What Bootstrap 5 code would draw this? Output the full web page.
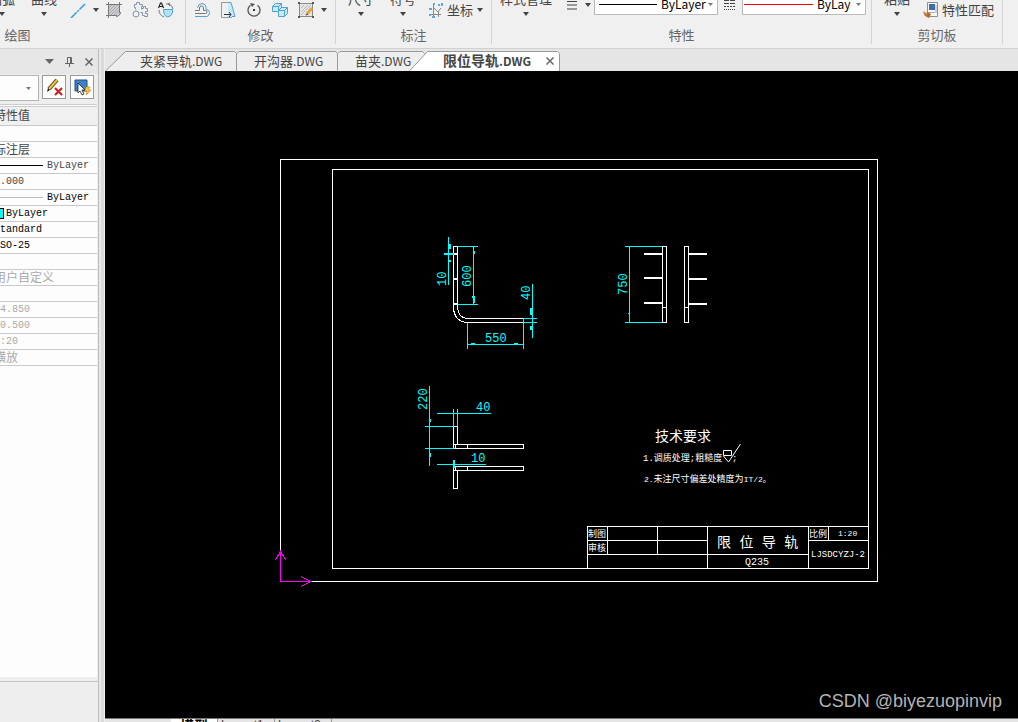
<!DOCTYPE html>
<html lang="zh-CN">
<head>
<meta charset="utf-8">
<meta name="viewport" content="width=device-width, initial-scale=1">
<title>限位导轨.DWG</title>
<link href="https://cdn.jsdelivr.net/npm/bootstrap@5.3.0/dist/css/bootstrap.min.css" rel="stylesheet">
<style>
  body { font-family: "Noto Sans CJK SC", sans-serif; font-size: 13px; line-height: 16px; color: #444; background: #e5e5e5; }
  button, select { font: inherit; color: inherit; }
  button { background: none; border: 0; padding: 0; }
  svg { display: block; flex: none; }

  /* ribbon */
  .ribbon { height: 49px; background: #f0f0f0; border-bottom: 1px solid #d2d2d2; padding-bottom: 4px; }
  .rgroup { height: 62px; border-right: 1px solid #d4d4d4; flex: none; }
  .rgroup-draw { width: 336px; margin-left: -150px; }
  .rgroup-edit { width: 150px; }
  .rgroup-dim { width: 156px; }
  .rgroup-prop { width: 380px; }
  .rgroup-clip { width: 131px; }
  .tools { height: 36px; gap: 10px; padding-right: 8px; }
  .tools-draw { padding-right: 11px; }
  .tools-wide { gap: 6px; padding-right: 5px; }
  .rlabel { height: 26px; line-height: 34px; color: #666; text-align: center; }
  .big { min-width: 32px; height: 27px; display: flex; flex-direction: column; align-items: center; justify-content: space-between; padding-bottom: 2px; white-space: nowrap; }
  .split { display: flex; align-items: center; gap: 7px; }
  .split:not(:last-child) { margin-right: -3px; }
  .labelled { display: flex; align-items: center; gap: 4px; white-space: nowrap; }
  .caret { width: 6px; height: 4px; background: #444; clip-path: polygon(0 0, 100% 0, 50% 100%); flex: none; }
  .combo { width: 124px; height: 22px; background: #fff; border: 1px solid #bbb; margin-bottom: 3px; padding-left: 4px; }
  .combo select { appearance: none; border: 0; padding: 0; width: 56px; color: #000; font-size: 12px; line-height: 20px; flex: none;
    background: url("data:image/svg+xml,%3Csvg xmlns='http://www.w3.org/2000/svg' viewBox='0 0 5 3'%3E%3Cpath d='M0 0h5L2.500 3z' fill='%23777'/%3E%3C/svg%3E") no-repeat right 4px center / 5px 3px; }
  .combo-tight { padding-left: 1px; }
  .combo-tight select { width: 48px; padding-right: 14px; }
  .rule { height: 1px; background: #000; flex: 1; }
  .rule-red { background: #f00; }
  .raised { margin-bottom: 7px; }

  /* property palette */
  .palette { width: 99px; background: #eee; border-right: 1px solid #bdbdbd; overflow: hidden; }
  .splitter { width: 6px; background: #dadada; border-left: 2px solid #e8e8e8; border-right: 1px solid #efefef; }
  .pal-head { height: 25px; background: #e6e6e6; gap: 11px; padding-right: 5px; }
  .pal-tools { height: 30px; padding-top: 1px; gap: 3px; padding-right: 4px; }
  .pal-tools .picker { appearance: none; height: 26px; flex: 1; min-width: 0; border: 1px solid #b5b5b5; border-left: 0; border-radius: 0;
    background: #fdfdfd url("data:image/svg+xml,%3Csvg xmlns='http://www.w3.org/2000/svg' viewBox='0 0 5 3'%3E%3Cpath d='M0 0h5L2.500 3z' fill='%23777'/%3E%3C/svg%3E") no-repeat right 7px center / 5px 3px; }
  .pal-btn { width: 24px; height: 24px; background: #fdfdfd; border: 1px solid #999; display: flex; align-items: center; justify-content: center; }
  .pal-btn + .pal-btn { margin-left: 1px; }
  .pal-body { background: #fdfdfd; border-top: 1px solid #ccc; padding-top: 1px; margin-right: 1px; }
  .props { width: 100%; border-collapse: collapse; font-family: "Liberation Mono", "Noto Sans CJK SC", monospace; font-size: 10px; table-layout: fixed; }
  .props th, .props td { height: 16px; line-height: 15px; padding: 0; border-bottom: 1px solid #c9c9c9; white-space: nowrap; overflow: hidden; font-weight: 400; }
  .props th { height: 19px; line-height: 16px; padding-top: 2px; background: #f0f0f0; border-top: 1px solid #ccc; font-size: 12px; text-indent: -6px; }
  .props .cut { text-indent: -6px; }
  .props .han { font-size: 12px; line-height: 12px; padding-top: 3px; }
  .props .strong-ink { color: #000; }
  .props .off { color: #aaa; }
  .sample { display: flex; align-items: center; gap: 4px; padding-right: 8px; }
  .swatch { width: 4px; height: 11px; background: #0ff; border: 1px solid #000; border-left: 0; margin-right: 2px; }
  .rule-grey { background: #bbb; }
  .pal-foot { height: 45px; background: #eee; border-top: 1px solid #eee; padding-top: 3px; }
  .pal-foot div { border-top: 1px solid #c4c4c4; }

  /* document tabs */
  .doc-tabs { height: 22px; padding-top: 2px; }
  .doc-tab { position: relative; height: 20px; line-height: 18px; flex: none; white-space: nowrap; text-align: left; }
  .doc-tab svg.shape { position: absolute; inset: 0; }
  .doc-tab .cap { position: relative; }
  .doc-tab small { font-size: 12px; }
  .tab-a { width: 132px; padding-left: 35px; }
  .tab-b { width: 101px; padding-left: 17px; }
  .tab-c { width: 87px; padding-left: 17px; }
  .tab-on { width: 151px; padding-left: 34px; margin-left: -16px; font-weight: 700; font-size: 14px; }
  .tab-on .shut { position: absolute; right: 6px; top: 6px; }

  /* drawing area */
  .canvas { background: #000; min-height: 0; position: relative; overflow: hidden; }
  .canvas > svg { width: 100%; height: 100%; }
  .watermark { position: absolute; right: 16px; bottom: 4px; font-family: "Liberation Sans", sans-serif; font-size: 18px; line-height: 26px; color: #b4b4b4; }
  .w { stroke: #fff; fill: none; shape-rendering: crispEdges; }
  .c { stroke: #0ff; fill: none; shape-rendering: crispEdges; }
  .t { font-family: "Liberation Mono", "Noto Sans CJK SC", monospace; fill: #fff; }
  .dim { font-family: "Liberation Mono", monospace; font-size: 12px; fill: #0ff; }
  .model-tabs { height: 4px; border-top: 1px solid #777; padding-left: 66px; overflow: hidden; font-size: 12px; }
  .model-tabs button { height: 12px; line-height: 12px; width: 57px; padding-left: 3px; text-align: left; border-right: 1px solid #999; flex: none; font-family: "Liberation Sans", sans-serif; }
  .model-tabs .now { width: 47px; padding-left: 9px; background: #fff; font-weight: 700; font-size: 14px; color: #000; font-family: "Noto Sans CJK SC", sans-serif; }
</style>
</head>
<body>
<div class="vh-100 d-flex flex-column overflow-hidden">

  <header class="ribbon d-flex align-items-end overflow-hidden flex-shrink-0">
    <section class="rgroup rgroup-draw">
      <div class="tools tools-draw d-flex align-items-end justify-content-end">
        <button class="big">圆弧<span class="caret"></span></button>
        <button class="big">曲线<span class="caret"></span></button>
        <button class="split" aria-label="构造线">
          <svg width="16" height="16"><path d="M1 16L15 2" stroke="#2f9be0" stroke-width="1.500" stroke-dasharray="8 1 2 1"/></svg>
          <span class="caret"></span>
        </button>
        <button aria-label="填充">
          <svg width="16" height="16" fill="none"><path d="M3 3h11v7q0 4-4 4H3z" fill="#c9ccd0"/><path d="M3 6l3-3M3 9l6-6M3 12l9-9M4 14L14 4M7 14l7-7" stroke="#aaa"/><path d="M2.500 0v16M13.500 0v11M0 2.500h16M0 13.500h11M10 15q4-1 5-5" stroke="#777"/></svg>
        </button>
        <button aria-label="块">
          <svg width="16" height="16" fill="#eef1f5" stroke="#8492a3"><path d="M3.500 7.500v-2h-1v-3h2v-2h3v2h3v2h-1v3M9.500 6.500h2v-2h2v2h2v3h-2v2h2v3h-3v-1h-2v-3h-2"/><circle cx="4" cy="12" r="3"/></svg>
        </button>
        <button aria-label="文字参数">
          <svg width="16" height="16" fill="none"><path d="M5.500 7.500h9v3q-1 4-5 4.500-4-1-4-7.500z" fill="#b5e1f8" stroke="#4ba3d8"/><path d="M8 2q5-1 7 5M1 8q0 5 5 7" stroke="#777"/><path d="M12 1l-2 1 2 2" stroke="#777"/><path d="M.5 6l2-5h1l2 5M1.500 4.500h3" stroke="#222" stroke-width="1.200"/></svg>
        </button>
      </div>
      <div class="rlabel">绘图</div>
    </section>

    <section class="rgroup rgroup-edit">
      <div class="tools d-flex align-items-end justify-content-end">
        <button aria-label="偏移">
          <svg width="16" height="16" fill="none"><path d="M1 8.500h4.500V6a2 2 0 014 0v2.500h2a1.500 1.500 0 010 3H1" stroke="#777"/><path d="M1 14.500h12q2.500-1 2.500-4t-3.500-3V5q0-3-4-3.500Q4 2 3.500 6" stroke="#4ba3d8"/></svg>
        </button>
        <button aria-label="拉伸">
          <svg width="16" height="16" fill="none"><path d="M8 1h3l4 14H8z" fill="#c8eafa"/><path d="M9 .5h2l4 14h-3" stroke="#4ba3d8"/><path d="M9 .5H1.500v15H12" stroke="#999"/><path d="M4 12.500h7M9 10l2 2.500-2 2.500" stroke="#333"/></svg>
        </button>
        <button aria-label="旋转">
          <svg width="16" height="16" fill="none" stroke="#555" stroke-width="1.300"><path d="M4.500 3.200a6 6 0 107 0"/><path d="M4 1l5 1-3 3z" fill="#555" stroke="none"/><path d="M7 7h2v2H7z" fill="#333" stroke="none"/></svg>
        </button>
        <button aria-label="阵列">
          <svg width="16" height="16" fill="#c8eafa" stroke="#4ba3d8"><path d="M.5 4.500l3-3h6v5l-3 3h-6zM.5 4.500h6v5M6.500 4.500l3-3"/><path d="M6.500 8.500l3-3h6v6l-3 3h-6zM6.500 8.500h6v6M12.500 8.500l3-3"/></svg>
        </button>
        <button class="split" aria-label="编辑填充">
          <svg width="16" height="16" fill="none"><path d="M1.500 1.500h13v13h-13z" fill="#e4e5e7" stroke="#888"/><path d="M3 6l3-3M3 10l7-7M3 13L13 3M7 13l6-6" stroke="#bbb"/><path d="M0 0h2v2H0zM14 0h2v2h-2zM0 14h2v2H0zM14 14h2v2h-2z" fill="#555"/><path d="M9 12l5-6" stroke="#e8a33c" stroke-width="3"/><path d="M8 13l2-1" stroke="#333"/></svg>
          <span class="caret"></span>
        </button>
      </div>
      <div class="rlabel">修改</div>
    </section>

    <section class="rgroup rgroup-dim">
      <div class="tools d-flex align-items-end justify-content-end">
        <button class="big">尺寸<span class="caret"></span></button>
        <button class="big">符号<span class="caret"></span></button>
        <button class="labelled">
          <svg width="14" height="16" fill="none"><path d="M4.500 3v12M2 12.500h10M5 6l4 4 3-4M9.500 10v5" stroke="#888"/><path d="M0 6h3v2H0zM0 12h2v2H0zM4 1h2v2H4zM9 2h2v2H9zM12 1h2v3h-2zM3 14h3v2H3z" fill="#5aa9e6"/></svg>
          坐标<span class="caret"></span>
        </button>
      </div>
      <div class="rlabel">标注</div>
    </section>

    <section class="rgroup rgroup-prop">
      <div class="tools tools-wide d-flex align-items-end justify-content-end">
        <button class="big me-2">样式管理<span class="caret"></span></button>
        <button class="split raised" aria-label="线宽">
          <svg width="12" height="12"><path d="M1 2.500h10M1 6h10M1 10h10" stroke="#444" stroke-width="1.200"/></svg>
          <span class="caret"></span>
        </button>
        <div class="combo d-flex align-items-center"><span class="rule me-1"></span><select aria-label="线宽"><option>ByLayer</option></select></div>
        <button class="raised" aria-label="线型">
          <svg width="12" height="12"><path d="M0 1.500h12M0 4.500h12" stroke="#444" stroke-dasharray="5 1"/><path d="M0 7.500h12" stroke="#444" stroke-dasharray="2 1"/><path d="M0 10.500h12" stroke="#444" stroke-dasharray="1 1"/></svg>
        </button>
        <div class="combo combo-tight d-flex align-items-center"><span class="rule rule-red me-1"></span><select aria-label="线型"><option>ByLayer</option></select></div>
      </div>
      <div class="rlabel">特性</div>
    </section>

    <section class="rgroup rgroup-clip">
      <div class="tools d-flex align-items-end justify-content-end">
        <button class="big">粘贴<span class="caret"></span></button>
        <button class="labelled">
          <svg width="15" height="16" fill="none"><path d="M4.500.5h10v14h-10z" fill="#f8f8f8" stroke="#8a9099"/><path d="M6 2h6v6H6z" fill="#3d6ea8"/><path d="M13 3v8M6 10.500h6" stroke="#aaa"/><path d="M0 10l3 1 2-1 3 2-2 4-4-2z" fill="#b9692a"/><path d="M1 9l3 4" stroke="#e8b06b"/></svg>
          特性匹配
        </button>
      </div>
      <div class="rlabel">剪切板</div>
    </section>
  </header>

  <div class="d-flex flex-grow-1" style="min-height:0">
    <aside class="palette d-flex flex-column flex-shrink-0">
      <div class="pal-head d-flex align-items-center justify-content-end flex-shrink-0">
        <button aria-label="菜单"><svg width="9" height="5"><path d="M0 0h9L4.500 5z" fill="#666"/></svg></button>
        <button aria-label="固定"><svg width="9" height="10" fill="none" stroke="#666"><path d="M2.500 6V.5h4V6M0 6.500h9M4.500 7v3M5.500 1v5"/></svg></button>
        <button aria-label="关闭"><svg width="8" height="8"><path d="M.5.5l7 7M7.500.5l-7 7" stroke="#666" stroke-width="1.500"/></svg></button>
      </div>
      <div class="pal-tools d-flex flex-shrink-0">
        <select class="picker" aria-label="选择对象"></select>
        <button class="pal-btn" aria-label="清除选择">
          <svg width="17" height="17" fill="none"><path d="M3 10l8-9" stroke="#5a4410" stroke-width="4"/><path d="M3 10l8-9" stroke="#f2c24d" stroke-width="2"/><path d="M1 13l1-4 2 2z" fill="#222"/><path d="M9 9l7 7M16 9l-7 7" stroke="#d01818" stroke-width="2"/></svg>
        </button>
        <button class="pal-btn" aria-label="快速选择">
          <svg width="17" height="17"><path d="M1 1h12v11H1z" fill="#3b82c8" stroke="#234f86"/><path d="M4 4v10l2-2 2 4 2-1-2-4h3z" fill="#fff" stroke="#222" stroke-width=".8"/><path d="M12 8h4l-2 3h3l-5 5 1-4h-2z" fill="#ffc83d" stroke="#d98310" stroke-width=".7"/></svg>
        </button>
      </div>
      <div class="pal-body flex-grow-1">
        <table class="props">
          <thead><tr><th scope="col">特性值</th></tr></thead>
          <tbody>
            <tr><td></td></tr>
            <tr><td class="cut han">标注层</td></tr>
            <tr><td><div class="sample"><span class="rule"></span>ByLayer</div></td></tr>
            <tr><td class="cut">0.000</td></tr>
            <tr><td class="strong-ink"><div class="sample"><span class="rule rule-grey"></span>ByLayer</div></td></tr>
            <tr><td class="strong-ink"><div class="d-flex align-items-center"><span class="swatch"></span>ByLayer</div></td></tr>
            <tr><td class="cut strong-ink">Standard</td></tr>
            <tr><td class="cut strong-ink">ISO-25</td></tr>
            <tr><td></td></tr>
            <tr><td class="cut han off">用户自定义</td></tr>
            <tr><td></td></tr>
            <tr><td class="off">4.850</td></tr>
            <tr><td class="off">0.500</td></tr>
            <tr><td class="cut off">1:20</td></tr>
            <tr><td class="cut han off">横放</td></tr>
          </tbody>
        </table>
      </div>
      <div class="pal-foot flex-shrink-0"><div></div></div>
    </aside>
    <div class="splitter flex-shrink-0"></div>

    <main class="d-flex flex-column flex-grow-1" style="min-width:0">
      <nav class="doc-tabs d-flex flex-shrink-0" aria-label="图纸">
        <button class="doc-tab tab-a"><svg class="shape" width="132" height="20"><path d="M.5 20L20.500.5h109l2 2V20" fill="#eee" stroke="#999"/></svg><span class="cap">夹紧导轨<small>.DWG</small></span></button>
        <button class="doc-tab tab-b"><svg class="shape" width="101" height="20"><path d="M0 2.500l2-2h96.500l2 2V20H0z" fill="#eee"/><path d="M0 2.500l2-2h96.500l2 2V20" fill="none" stroke="#999"/></svg><span class="cap">开沟器<small>.DWG</small></span></button>
        <button class="doc-tab tab-c"><svg class="shape" width="87" height="20"><path d="M0 2.500l2-2h82.500l2 2V20H0z" fill="#eee"/><path d="M0 2.500l2-2h82.500l2 2" fill="none" stroke="#999"/></svg><span class="cap">苗夹<small>.DWG</small></span></button>
        <div class="doc-tab tab-on"><svg class="shape" width="151" height="20"><path d="M.5 20L18.500.5h130l2 2V20" fill="#fff" stroke="#999"/></svg><span class="cap">限位导轨<small>.DWG</small></span>
          <button class="shut" aria-label="关闭"><svg width="8" height="8"><path d="M.5.5l7 7M7.500.5l-7 7" stroke="#666" stroke-width="1.500"/></svg></button></div>
      </nav>

      <div class="canvas flex-grow-1">
        <svg viewBox="105 71 913 647" preserveAspectRatio="xMinYMin meet">
          <!-- sheet border and frame -->
          <path class="w" d="M280.500 581.500V159.500H877.500V581.500ZM332.500 169.500H868.500V568.500H332.500Z"/>
          <!-- origin marker -->
          <path d="M280.500 551v30.500H311M275.500 560l5-9 5 9M301 576.500l10 5-10 5" stroke="#f0f" fill="none" shape-rendering="crispEdges"/>

          <!-- side view of the bent rail -->
          <path class="w" d="M453.500 308V246.500h4V308M457.500 308q1 10 10 10.500H523.500v4H467.500q-13-1-14-14.500"/>
          <path class="w" stroke-width="2" d="M453 254h5M453 279h5M453 304h5"/>
          <path class="c" d="M448.500 237v48M458 246.500h20M473.500 246v58M458 304.500h20M467.500 323v26M523.500 318v31M467 344.500h57M532.500 284v54M524 318.500h13M524 322.500h13"/>
          <path class="c" stroke-width="2" d="M444 254h10M448 245h3M450 246v3M450 260v2M474 251v3M472 297h3M474 297v6M471 344h4M514 344h4M530 309h3M531 310v5M531 326v4"/>
          <text class="dim" transform="translate(446 286) rotate(-90)">10</text>
          <text class="dim" transform="translate(471 287) rotate(-90)">600</text>
          <text class="dim" transform="translate(530 300) rotate(-90)">40</text>
          <text class="dim" x="485" y="342">550</text>

          <!-- end views -->
          <path class="w" d="M662.500 246.500h4V322.500h-4ZM662.500 307.500h4M684.500 246.500h4V322.500h-4ZM684.500 307.500h4"/>
          <path class="w" stroke-width="2" d="M644 254h18M644 278h18M644 303h18M689 254h18M689 279h18M689 304h18"/>
          <path class="c" d="M625 246.500h37M625 322.500h37M629.500 246v77M628 313.500h2"/>
          <text class="dim" transform="translate(627 295) rotate(-90)">750</text>

          <!-- plan views -->
          <path class="w" d="M453.500 426.500h4v18H523.500v4H453.500ZM467.500 444v4M453.500 488.500V466.500H523.500v4H457.500v18ZM467.500 466v4M453 470.500h5M453 444.500h5M455.500 445v4M455.500 467v3"/>
          <path class="c" d="M429.500 386v80M437 413.500h54M453.500 409v17M457.500 409v17M425 426.500h28M425 448.500h29M437 464.500h49"/>
          <path class="c" stroke-width="2" d="M454 460v8M430 419v3M430 453v4"/>
          <text class="dim" transform="translate(427 410) rotate(-90)">220</text>
          <text class="dim" x="476" y="411">40</text>
          <text class="dim" x="471" y="462">10</text>

          <!-- technical notes -->
          <text class="t" x="655" y="441" font-size="14">技术要求</text>
          <text class="t" x="643" y="461" font-size="9">1.调质处理;粗糙度</text>
          <text class="t" x="732" y="461" font-size="9">;</text>
          <path d="M723.500 450.500h8v5h-8ZM723.500 456l5 6 12-18" stroke="#fff" fill="none"/>
          <text class="t" x="644" y="482" font-size="9"><tspan font-size="8">2.</tspan>未注尺寸偏差处精度为<tspan font-size="8">IT/2。</tspan></text>

          <!-- title block -->
          <path class="w" d="M587.500 568V526.500H868M587 540.500h120M808 540.500h60M587 554.500h221M607.500 526v28M657.500 526v28M707.500 526v42M808.500 526v42M828.500 526v14"/>
          <text class="t" x="588" y="537" font-size="9">制图</text>
          <text class="t" x="588" y="551" font-size="9">审核</text>
          <text class="t" x="717" y="547" font-size="14">限 位 导 轨</text>
          <text class="t" x="745" y="565" font-size="10">Q235</text>
          <text class="t" x="809" y="537" font-size="9">比例</text>
          <text class="t" x="838" y="536" font-size="8">1:20</text>
          <text class="t" x="811" y="557" font-size="9">LJSDCYZJ-2</text>
        </svg>
        <div class="watermark">CSDN @biyezuopinvip</div>
      </div>

      <nav class="model-tabs d-flex flex-shrink-0" aria-label="布局">
        <button class="now">模型</button>
        <button>Layout1</button>
        <button>Layout2</button>
      </nav>
    </main>
  </div>
</div>
<script src="https://cdn.jsdelivr.net/npm/bootstrap@5.3.0/dist/js/bootstrap.bundle.min.js"></script>
</body>
</html>
